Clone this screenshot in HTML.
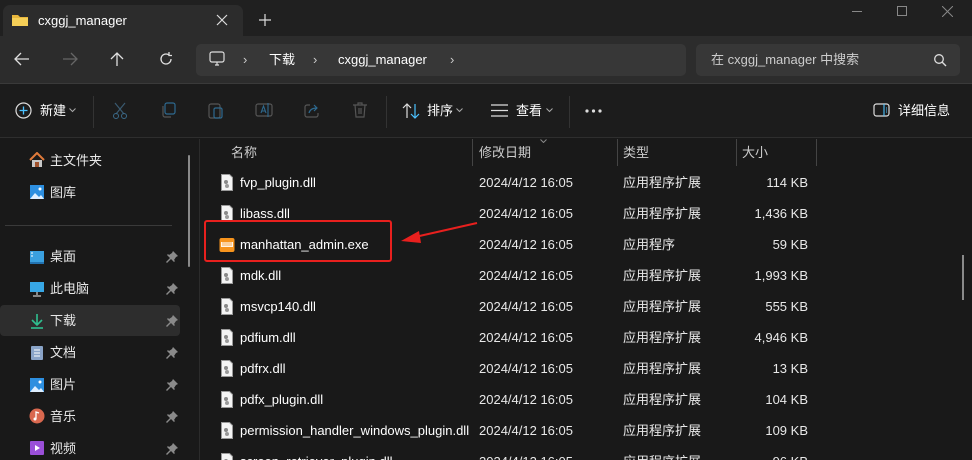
<!DOCTYPE html>
<html style="overflow:hidden;width:972px;height:460px"><head><meta charset="utf-8"><style>
*{margin:0;padding:0;box-sizing:border-box}
body{width:972px;height:460px;overflow:hidden;background:#191919;font-family:"Liberation Sans","Noto Sans CJK SC",sans-serif;color:#e8e8e8;font-size:13px;position:relative}
.a{position:absolute;white-space:nowrap;line-height:16px}
.t{font-size:13px}
</style></head><body>
<!-- title bar -->
<div class="a" style="left:0;top:0;width:972px;height:36px;background:#202020"></div>
<div class="a" style="left:3px;top:5px;width:240px;height:31px;background:#2c2c2c;border-radius:7px 7px 0 0"></div>
<svg class="a" style="left:11px;top:13px" width="18" height="14"><path d="M1 2h6l2 2h8v9H1z" fill="#e8b63c"/><path d="M1 5h16v8H1z" fill="#f5cf57"/></svg>
<div class="a t" style="left:38px;top:13px;color:#fff">cxggj_manager</div>
<svg class="a" style="left:216px;top:14px" width="12" height="12"><path d="M1 1L11 11M11 1L1 11" stroke="#ddd" stroke-width="1.2"/></svg>
<svg class="a" style="left:259px;top:14px" width="12" height="12"><path d="M6 0V12M0 6H12" stroke="#ddd" stroke-width="1.2"/></svg>
<div class="a" style="left:852px;top:11px;width:10px;height:1px;background:#888"></div>
<div class="a" style="left:897px;top:6px;width:10px;height:10px;border:1px solid #888"></div>
<svg class="a" style="left:942px;top:6px" width="11" height="11"><path d="M0 0L11 11M11 0L0 11" stroke="#888" stroke-width="1"/></svg>
<!-- nav row -->
<div class="a" style="left:0;top:36px;width:972px;height:48px;background:#2c2c2c;border-bottom:1px solid #3a3a3a"></div>
<svg class="a" style="left:14px;top:52px" width="16" height="14"><path d="M15 7H2M7 1L1 7l6 6" stroke="#e0e0e0" stroke-width="1.3" fill="none"/></svg>
<svg class="a" style="left:62px;top:52px" width="16" height="14"><path d="M1 7H14M9 1l6 6-6 6" stroke="#666" stroke-width="1.3" fill="none"/></svg>
<svg class="a" style="left:110px;top:51px" width="14" height="16"><path d="M7 15V2M1 8l6-6 6 6" stroke="#e0e0e0" stroke-width="1.3" fill="none"/></svg>
<svg class="a" style="left:159px;top:52px" width="14" height="14"><path d="M12 7a5 5 0 1 1-2-4M10 0v3.5h3" stroke="#e0e0e0" stroke-width="1.3" fill="none"/></svg>
<div class="a" style="left:196px;top:44px;width:490px;height:32px;background:#373737;border-radius:5px"></div>
<svg class="a" style="left:209px;top:51px" width="16" height="16"><rect x="1" y="1" width="14" height="10" rx="2" stroke="#ddd" fill="none" stroke-width="1.2"/><path d="M6 14h4M8 11v3" stroke="#ddd" stroke-width="1.2"/></svg>
<div class="a t" style="left:243px;top:52px;color:#ccc">›</div>
<div class="a t" style="left:269px;top:52px;color:#fff">下载</div>
<div class="a t" style="left:313px;top:52px;color:#ccc">›</div>
<div class="a t" style="left:338px;top:52px;color:#fff">cxggj_manager</div>
<div class="a t" style="left:450px;top:52px;color:#ccc">›</div>
<div class="a" style="left:696px;top:44px;width:264px;height:32px;background:#373737;border-radius:5px"></div>
<div class="a t" style="left:711px;top:52px;color:#ccc">在 cxggj_manager 中搜索</div>
<svg class="a" style="left:933px;top:53px" width="14" height="14"><circle cx="6" cy="6" r="4.3" stroke="#ddd" fill="none" stroke-width="1.3"/><path d="M9 9l4 4" stroke="#ddd" stroke-width="1.4"/></svg>
<!-- toolbar -->
<div class="a" style="left:0;top:84px;width:972px;height:54px;background:#1c1c1c;border-bottom:1px solid #2e2e2e"></div>
<svg class="a" style="left:15px;top:102px" width="17" height="17"><circle cx="8.5" cy="8.5" r="7.5" stroke="#ddd" fill="none" stroke-width="1.2"/><path d="M8.5 4.5v8M4.5 8.5h8" stroke="#4cc2ff" stroke-width="1.3"/></svg>
<div class="a t" style="left:40px;top:103px;color:#fff">新建</div>
<svg class="a" style="left:69px;top:108px" width="7" height="5"><path d="M0.5 0.5l3 3 3-3" stroke="#aaa" fill="none"/></svg>
<div class="a" style="left:93px;top:96px;width:1px;height:32px;background:#333"></div>
<svg class="a" style="left:112px;top:102px" width="16" height="17"><path d="M3 1l9 11M13 1L4 12" stroke="#3a5a70" stroke-width="1.2"/><circle cx="4" cy="14" r="2.5" stroke="#3a6a8a" fill="none"/><circle cx="12" cy="14" r="2.5" stroke="#3a6a8a" fill="none"/></svg>
<svg class="a" style="left:160px;top:102px" width="16" height="16"><rect x="5" y="1" width="10" height="11" rx="2" stroke="#2e6a90" fill="none" stroke-width="1.2"/><path d="M3 4v9a2 2 0 0 0 2 2h6" stroke="#555" fill="none" stroke-width="1.2"/></svg>
<svg class="a" style="left:208px;top:101px" width="16" height="18"><rect x="1" y="3" width="11" height="14" rx="2" stroke="#555" fill="none" stroke-width="1.2"/><rect x="6" y="7" width="8" height="10" rx="1.5" stroke="#2e6a90" fill="none" stroke-width="1.2"/></svg>
<svg class="a" style="left:255px;top:102px" width="18" height="16"><rect x="1" y="2" width="16" height="12" rx="2" stroke="#555" fill="none" stroke-width="1.2"/><path d="M6 11l2.5-7L11 11M7 9h3M13 1v14" stroke="#2e6a90" fill="none" stroke-width="1.1"/></svg>
<svg class="a" style="left:304px;top:102px" width="16" height="16"><path d="M6 3H3a2 2 0 0 0-2 2v8a2 2 0 0 0 2 2h9a2 2 0 0 0 2-2v-2" stroke="#555" fill="none" stroke-width="1.2"/><path d="M5 11c1-4 4-5 8-5M10 3l3 3-3 3" stroke="#2e6a90" fill="none" stroke-width="1.2"/></svg>
<svg class="a" style="left:352px;top:101px" width="16" height="18"><path d="M1 4h14M6 4V2h4v2M3 4l1 12h8l1-12M7 7v6M9 7v6" stroke="#555" fill="none" stroke-width="1.2"/></svg>
<div class="a" style="left:386px;top:96px;width:1px;height:32px;background:#333"></div>
<svg class="a" style="left:402px;top:103px" width="18" height="16"><path d="M5 15V1M1 5l4-4 4 4" stroke="#ddd" fill="none" stroke-width="1.2"/><path d="M13 1v14M9 11l4 4 4-4" stroke="#4cc2ff" fill="none" stroke-width="1.2"/></svg>
<div class="a t" style="left:427px;top:103px;color:#fff">排序</div>
<svg class="a" style="left:456px;top:108px" width="7" height="5"><path d="M0.5 0.5l3 3 3-3" stroke="#aaa" fill="none"/></svg>
<svg class="a" style="left:491px;top:104px" width="17" height="13"><path d="M0 1h17M0 6.5h17M0 12h17" stroke="#ddd" stroke-width="1.2"/></svg>
<div class="a t" style="left:516px;top:103px;color:#fff">查看</div>
<svg class="a" style="left:546px;top:108px" width="7" height="5"><path d="M0.5 0.5l3 3 3-3" stroke="#aaa" fill="none"/></svg>
<div class="a" style="left:569px;top:96px;width:1px;height:32px;background:#333"></div>
<svg class="a" style="left:585px;top:109px" width="17" height="4"><circle cx="2" cy="2" r="1.6" fill="#ddd"/><circle cx="8.5" cy="2" r="1.6" fill="#ddd"/><circle cx="15" cy="2" r="1.6" fill="#ddd"/></svg>
<svg class="a" style="left:873px;top:103px" width="17" height="14"><rect x="1" y="1" width="15" height="12" rx="2.5" stroke="#ddd" fill="none" stroke-width="1.2"/><path d="M11 1v12M13 5h1M13 7h1M13 9h1" stroke="#4cc2ff" stroke-width="1.1"/></svg>
<div class="a t" style="left:898px;top:103px;color:#fff">详细信息</div>
<!-- sidebar -->
<div class="a" style="left:0;top:305px;width:180px;height:31px;background:#2d2d2d;border-radius:4px"></div>
<div class="a" style="left:188px;top:155px;width:2px;height:112px;background:#8a8a8a;border-radius:1px"></div>
<div class="a" style="left:199px;top:139px;width:1px;height:321px;background:#2b2b2b"></div>
<div class="a" style="left:5px;top:225px;width:167px;height:1px;background:#3a3a3a"></div>
<svg class="a" style="left:29px;top:152px" width="16" height="16"><path d="M1 8L8 1l7 7" stroke="#e07a3a" stroke-width="2" fill="none"/><path d="M3 8v7h10V8" fill="#c8c8c8"/><rect x="6" y="10" width="4" height="5" fill="#a0522d"/></svg>
<div class="a t" style="left:50px;top:153px">主文件夹</div>
<svg class="a" style="left:29px;top:184px" width="16" height="16"><rect x="1" y="1" width="14" height="14" fill="#2d8fe0"/><path d="M1 15l5-6 4 4 2-2 3 4z" fill="#dfefff"/><circle cx="11" cy="5" r="1.5" fill="#fff"/></svg>
<div class="a t" style="left:50px;top:185px">图库</div>
<svg class="a" style="left:29px;top:249px" width="16" height="16"><rect x="1" y="2" width="14" height="11" fill="#3aa0e0"/><rect x="1" y="13" width="14" height="2" fill="#2272b0"/><path d="M2 4h2M2 7h2" stroke="#fff"/></svg>
<div class="a t" style="left:50px;top:249px">桌面</div>
<svg class="a" style="left:29px;top:281px" width="16" height="16"><rect x="1" y="1" width="14" height="10" fill="#37a7e6"/><path d="M8 11v3M4 15h8" stroke="#aaa" stroke-width="1.5"/></svg>
<div class="a t" style="left:50px;top:281px">此电脑</div>
<svg class="a" style="left:29px;top:313px" width="16" height="16"><path d="M8 1v10M3 7l5 5 5-5" stroke="#2fbf8f" stroke-width="1.6" fill="none"/><path d="M2 15h12" stroke="#2fbf8f" stroke-width="1.6"/></svg>
<div class="a t" style="left:50px;top:313px">下载</div>
<svg class="a" style="left:30px;top:345px" width="14" height="16"><rect x="1" y="1" width="12" height="14" rx="1" fill="#8aa4c8"/><path d="M4 5h6M4 8h6M4 11h6" stroke="#fff"/></svg>
<div class="a t" style="left:50px;top:345px">文档</div>
<svg class="a" style="left:29px;top:377px" width="16" height="16"><rect x="1" y="1" width="14" height="14" fill="#2d8fe0"/><path d="M1 15l5-6 4 4 2-2 3 4z" fill="#dfefff"/><circle cx="11" cy="5" r="1.5" fill="#fff"/></svg>
<div class="a t" style="left:50px;top:377px">图片</div>
<svg class="a" style="left:29px;top:408px" width="16" height="16"><circle cx="8" cy="8" r="7.5" fill="#d9684f"/><path d="M7 11V4l3 1" stroke="#fff" stroke-width="1.3" fill="none"/><circle cx="6" cy="11" r="1.5" fill="#fff"/></svg>
<div class="a t" style="left:50px;top:409px">音乐</div>
<svg class="a" style="left:29px;top:440px" width="16" height="16"><rect x="1" y="1" width="14" height="14" rx="1" fill="#9a4fd8"/><path d="M6 5v6l5-3z" fill="#fff"/></svg>
<div class="a t" style="left:50px;top:441px">视频</div>
<svg class="a" style="left:165px;top:250px" width="14" height="210"><defs><path id="p" d="M8 1l5 5-2 1-2 3 1 1-1 1-3-3-4 4-1-1 4-4-3-3 1-1 1 1 3-2z"/></defs><g fill="#8a8a8a"><use href="#p"/><use href="#p" y="32"/><use href="#p" y="64"/><use href="#p" y="96"/><use href="#p" y="128"/><use href="#p" y="160"/><use href="#p" y="192"/></g></svg>
<!-- header -->
<div class="a t" style="left:231px;top:145px;color:#ccc">名称</div>
<svg class="a" style="left:540px;top:139px" width="7" height="4"><path d="M0.5 0.5l3 3 3-3" stroke="#888" fill="none"/></svg>
<div class="a" style="left:472px;top:139px;width:1px;height:27px;background:#444"></div>
<div class="a t" style="left:479px;top:145px;color:#ccc">修改日期</div>
<div class="a" style="left:617px;top:139px;width:1px;height:27px;background:#444"></div>
<div class="a t" style="left:623px;top:145px;color:#ccc">类型</div>
<div class="a" style="left:736px;top:139px;width:1px;height:27px;background:#444"></div>
<div class="a t" style="left:742px;top:145px;color:#ccc">大小</div>
<div class="a" style="left:816px;top:139px;width:1px;height:27px;background:#444"></div>
<div class="a" style="left:962px;top:255px;width:2px;height:45px;background:#8a8a8a"></div>
<div class="a" style="left:0;top:0;width:972px;height:460px;overflow:hidden">
<script>
var d=[["fvp_plugin.dll","应用程序扩展","114 KB"],["libass.dll","应用程序扩展","1,436 KB"],["manhattan_admin.exe","应用程序","59 KB"],["mdk.dll","应用程序扩展","1,993 KB"],["msvcp140.dll","应用程序扩展","555 KB"],["pdfium.dll","应用程序扩展","4,946 KB"],["pdfrx.dll","应用程序扩展","13 KB"],["pdfx_plugin.dll","应用程序扩展","104 KB"],["permission_handler_windows_plugin.dll","应用程序扩展","109 KB"],["screen_retriever_plugin.dll","应用程序扩展","96 KB"]];
var h="";
d.forEach(function(r,i){var y=174+i*31;
var ic=i==2?'<svg class="a" style="left:219px;top:'+(y+1)+'px" width="16" height="16"><rect x="0.5" y="1" width="15" height="14" rx="2" fill="#f7941d"/><rect x="2" y="5" width="12" height="5" fill="#fff" opacity=".9"/><path d="M3 6h10M3 8h10" stroke="#f7941d" stroke-width=".8"/></svg>':'<svg class="a" style="left:221px;top:'+y+'px" width="12" height="17"><path d="M0.5 0.5h8l3 3v13h-11z" fill="#f4f4f4" stroke="#999"/><circle cx="5" cy="8" r="2" fill="#888"/><circle cx="6" cy="12" r="2" fill="#999"/></svg>';
h+=ic+'<div class="a t" style="left:240px;top:'+(y+1)+'px;color:#fff">'+r[0]+'</div>'+'<div class="a t" style="left:479px;top:'+(y+1)+'px">2024/4/12 16:05</div>'+'<div class="a t" style="left:623px;top:'+(y+1)+'px">'+r[1]+'</div>'+'<div class="a t" style="left:700px;width:108px;text-align:right;top:'+(y+1)+'px">'+r[2]+'</div>';});
document.write(h);
</script>
</div>
<!-- annotation -->
<div class="a" style="left:204px;top:220px;width:188px;height:42px;border:2.5px solid #e8201e;border-radius:3px"></div>
<svg class="a" style="left:395px;top:220px" width="85" height="30"><path d="M82 3L20 17" stroke="#e8201e" stroke-width="2"/><path d="M6 21L24 11l2 12z" fill="#e8201e"/></svg>
</body></html>
